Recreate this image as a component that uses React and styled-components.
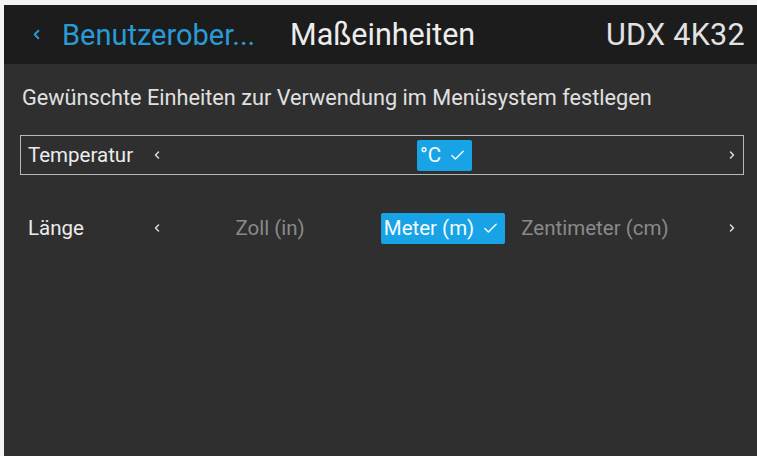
import React from 'react';
import styled, { createGlobalStyle } from 'styled-components';
import { ChevronLeft, ChevronRight, Check } from 'lucide-react';

const GlobalStyle = createGlobalStyle`
  html, body {
    margin: 0;
    padding: 0;
    background: #ffffff;
  }
  body {
    font-family: Roboto, "Liberation Sans", sans-serif;
  }
`;

const Frame = styled.div`
  width: 757px;
  height: 456px;
  box-sizing: border-box;
  padding: 5px 0 0 4px;
  background: #f4f4f4;
  overflow: hidden;
`;

const Screen = styled.div`
  display: flex;
  flex-direction: column;
  height: 100%;
  background: #2f2f2f;
  color: #e6e6e6;
`;

const Header = styled.header`
  display: flex;
  align-items: center;
  height: 59px;
  padding: 0 12px 0 25px;
  background: #1c1c1c;
  font-size: 29px;
`;

const BackLink = styled.div`
  display: flex;
  align-items: center;
  gap: 18px;
  width: 261px;
  color: #2a9ad6;
`;

const Title = styled.div`
  flex: 1;
  font-size: 30.5px;
  color: #ededed;
`;

const Model = styled.div`
  font-size: 30.5px;
  letter-spacing: 0.3px;
  color: #e2e2e2;
`;

const Intro = styled.p`
  margin: 21px 0 0 18px;
  font-size: 21.7px;
  line-height: 25px;
  color: #e0e0e0;
`;

const Rows = styled.div`
  display: flex;
  flex-direction: column;
  gap: 33px;
  margin: 25px 13px 0 16px;
`;

const Row = styled.div`
  display: grid;
  grid-template-columns: 122px 14px 1fr 14px;
  align-items: center;
  height: 40px;
  box-sizing: border-box;
  padding: 0 4px 0 7px;
  border: 1.5px solid ${(p) => (p.$focused ? '#b9b9b9' : 'transparent')};
  font-size: 20.5px;
`;

const Label = styled.span`
  color: #ececec;
`;

const Arrow = styled.span`
  display: flex;
  align-items: center;
  justify-content: center;
  color: #dcdcdc;
`;

const Options = styled.div`
  display: flex;
  align-items: center;
  justify-content: center;
  gap: 13px;
  padding-left: ${(p) => p.$shift || 0}px;
`;

const Option = styled.span`
  display: flex;
  align-items: center;
  gap: 8px;
  height: 31px;
  padding: 0 6px 0 3px;
  margin-right: ${(p) => p.$after || 0}px;
  color: ${(p) => (p.$selected ? '#f4fbff' : '#8a8a8a')};
  background: ${(p) => (p.$selected ? '#18a3e6' : 'transparent')};
  border-radius: 2px;
`;

const units = [
  { label: 'Temperatur', options: [{ text: '°C', selected: true }], focused: true, shift: 0 },
  {
    label: 'Länge',
    shift: 18,
    options: [
      { text: 'Zoll (in)', after: 57 },
      { text: 'Meter (m)', selected: true },
      { text: 'Zentimeter (cm)' },
    ],
  },
];

export default function App() {
  return (
    <>
      <GlobalStyle />
      <Frame>
        <Screen>
          <Header>
            <BackLink>
              <ChevronLeft size={15} strokeWidth={3} />
              <span>Benutzerober...</span>
            </BackLink>
            <Title>Maßeinheiten</Title>
            <Model>UDX 4K32</Model>
          </Header>
          <Intro>Gewünschte Einheiten zur Verwendung im Menüsystem festlegen</Intro>
          <Rows>
            {units.map((u) => (
              <Row key={u.label} $focused={u.focused}>
                <Label>{u.label}</Label>
                <Arrow>
                  <ChevronLeft size={12} strokeWidth={3} />
                </Arrow>
                <Options $shift={u.shift}>
                  {u.options.map((o) => (
                    <Option key={o.text} $selected={o.selected} $after={o.after}>
                      {o.text}
                      {o.selected && <Check size={17} strokeWidth={2} />}
                    </Option>
                  ))}
                </Options>
                <Arrow>
                  <ChevronRight size={12} strokeWidth={3} />
                </Arrow>
              </Row>
            ))}
          </Rows>
        </Screen>
      </Frame>
    </>
  );
}
